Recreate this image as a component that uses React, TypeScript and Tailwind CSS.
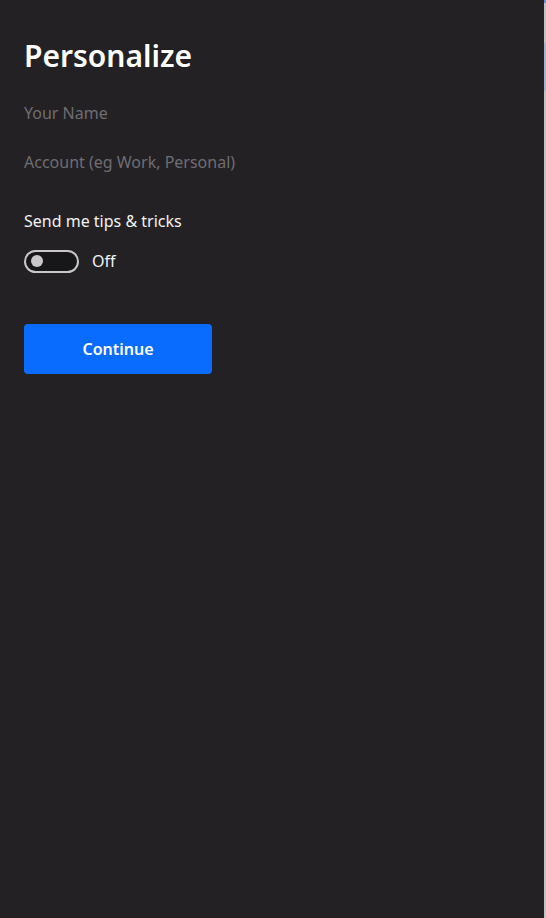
import React, { useState } from 'react';

const font = { fontFamily: '"Noto Sans", "Open Sans", sans-serif' };

export default function App() {
  const [tips, setTips] = useState(false);
  const [name, setName] = useState('');
  const [account, setAccount] = useState('');

  return (
    <div className="flex h-[918px] w-[546px] bg-[#232124]" style={font}>
      <div className="flex flex-1 flex-col px-6 pt-[34px]">
        <h1 className="text-[30px] font-semibold leading-[44px] text-white">Personalize</h1>

        <input
          value={name}
          onChange={(e) => setName(e.target.value)}
          placeholder="Your Name"
          className="mt-[22px] h-[26px] w-[300px] bg-transparent text-[16px] text-white outline-none placeholder:text-[#6f6d72]"
        />
        <input
          value={account}
          onChange={(e) => setAccount(e.target.value)}
          placeholder="Account (eg Work, Personal)"
          className="mt-[23px] h-[26px] w-[300px] bg-transparent text-[16px] text-white outline-none placeholder:text-[#6f6d72]"
        />

        <p className="mt-[35px] text-[16px] leading-[22px] text-[#f2f2f2]">Send me tips &amp; tricks</p>

        <div className="mt-[17px] flex items-center gap-[13px]">
          <button
            onClick={() => setTips(!tips)}
            className={`flex h-[23px] w-[55px] items-center rounded-full border-2 px-[5px] ${
              tips ? 'justify-end border-[#0a6cff] bg-[#0a6cff]' : 'justify-start border-[#c9c7ca] bg-[#171619]'
            }`}
          >
            <span className="h-[12px] w-[12px] rounded-full bg-[#c9c7ca]" />
          </button>
          <span className="text-[16px] text-[#f2f2f2]">{tips ? 'On' : 'Off'}</span>
        </div>

        <button className="mt-[51px] h-[50px] w-[188px] rounded-[4px] bg-[#0a6cff] text-[16px] font-semibold text-white">
          Continue
        </button>
      </div>

      <div className="flex w-[2px] flex-col bg-[#c2c2c4]">
        <div className="h-[3px] bg-[#6f8fd8]" />
        <div className="mt-[40px] h-[48px] bg-[#a8b2cc]" />
      </div>
    </div>
  );
}
